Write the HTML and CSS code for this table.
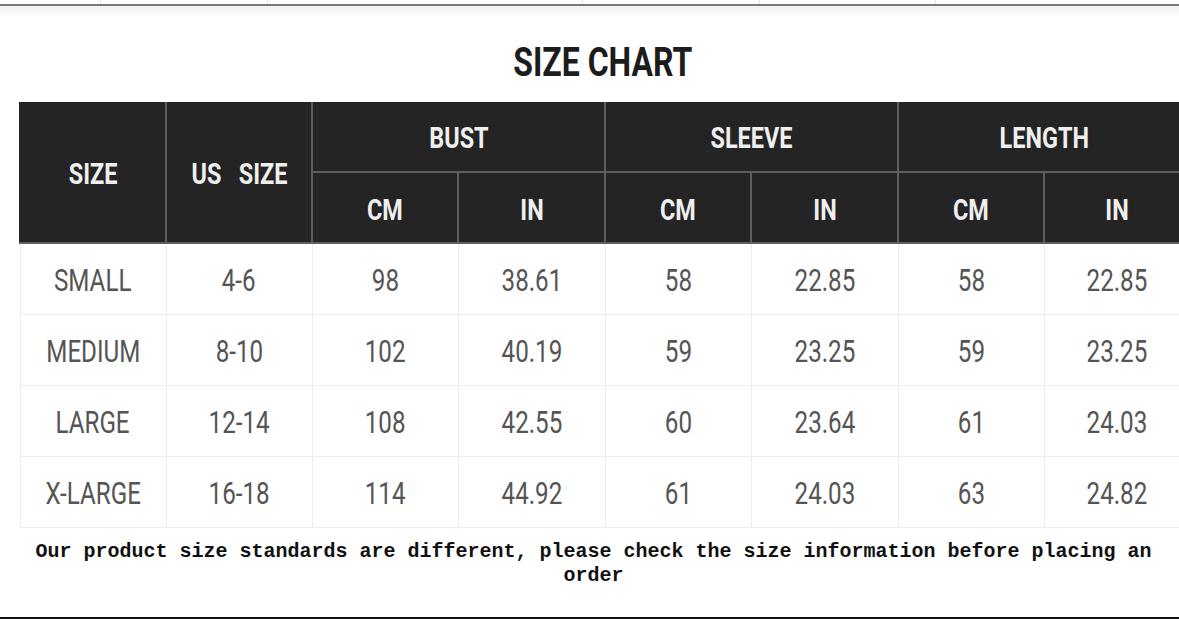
FILE: index.html
```html
<!DOCTYPE html>
<html>
<head>
<meta charset="utf-8">
<link rel="stylesheet" href="styles.css">
</head>
<body>
<div class="page">
  <div class="topstrip">
    <span class="cell c1"></span><span class="cell c2"></span><span class="cell c3"></span><span class="cell c4"></span><span class="cell c5"></span>
  </div>
  <div class="topband"></div>
  <div class="chart">
    <h1 class="title"><span class="cond">SIZE CHART</span></h1>
    <table class="grid">
      <colgroup>
        <col class="w146"><col class="w146"><col class="w146"><col class="w147"><col class="w146"><col class="w147"><col class="w146"><col class="w146">
      </colgroup>
      <thead>
        <tr class="h1">
          <th rowspan="2"><span class="cond">SIZE</span></th>
          <th rowspan="2"><span class="cond">US&nbsp;&nbsp; SIZE</span></th>
          <th colspan="2"><span class="cond">BUST</span></th>
          <th colspan="2"><span class="cond">SLEEVE</span></th>
          <th colspan="2"><span class="cond">LENGTH</span></th>
        </tr>
        <tr class="h2">
          <th><span class="cond">CM</span></th><th><span class="cond">IN</span></th>
          <th><span class="cond">CM</span></th><th><span class="cond">IN</span></th>
          <th><span class="cond">CM</span></th><th><span class="cond">IN</span></th>
        </tr>
      </thead>
      <tbody>
        <tr><td><span class="cond">SMALL</span></td><td><span class="cond">4-6</span></td><td><span class="cond">98</span></td><td><span class="cond">38.61</span></td><td><span class="cond">58</span></td><td><span class="cond">22.85</span></td><td><span class="cond">58</span></td><td><span class="cond">22.85</span></td></tr>
        <tr><td><span class="cond">MEDIUM</span></td><td><span class="cond">8-10</span></td><td><span class="cond">102</span></td><td><span class="cond">40.19</span></td><td><span class="cond">59</span></td><td><span class="cond">23.25</span></td><td><span class="cond">59</span></td><td><span class="cond">23.25</span></td></tr>
        <tr><td><span class="cond">LARGE</span></td><td><span class="cond">12-14</span></td><td><span class="cond">108</span></td><td><span class="cond">42.55</span></td><td><span class="cond">60</span></td><td><span class="cond">23.64</span></td><td><span class="cond">61</span></td><td><span class="cond">24.03</span></td></tr>
        <tr><td><span class="cond">X-LARGE</span></td><td><span class="cond">16-18</span></td><td><span class="cond">114</span></td><td><span class="cond">44.92</span></td><td><span class="cond">61</span></td><td><span class="cond">24.03</span></td><td><span class="cond">63</span></td><td><span class="cond">24.82</span></td></tr>
      </tbody>
    </table>
  </div>
  <p class="note">Our product size standards are different, please check the size information before placing an order</p>
  <div class="bottomrule"></div>
</div>
</body>
</html>
```

FILE: styles.css
```css
html, body {
  margin: 0;
  padding: 0;
  background: #ffffff;
}
body {
  width: 1179px;
  height: 619px;
  overflow: hidden;
}
.page {
  width: 1179px;
  height: 619px;
  display: flex;
  flex-direction: column;
  overflow: hidden;
}
.topstrip {
  height: 4px;
  display: flex;
  flex: none;
}
.topstrip .cell {
  height: 4px;
  border-right: 1px solid #e4e4e4;
  box-sizing: border-box;
}
.c1 { width: 101px; }
.c2 { width: 167px; }
.c3 { width: 315px; }
.c4 { width: 177px; }
.c5 { width: 176px; }
.topband {
  height: 8px;
  border-top: 2px solid #7a7a7a;
  background: linear-gradient(#f2f2f2, #fafafa);
  flex: none;
}
.chart {
  padding-left: 19px;
  width: 1168px;
  flex: none;
}
.title {
  margin: 0;
  height: 88px;
  box-sizing: border-box;
  padding-top: 23px;
  text-align: center;
  font-family: Roboto, "Liberation Sans", sans-serif;
  font-weight: 700;
  font-size: 41px;
  line-height: 50px;
  color: #1c1c1c;
}
.cond {
  display: inline-block;
  transform: scaleX(0.78);
  white-space: nowrap;
}
.grid {
  border-collapse: collapse;
  table-layout: fixed;
  width: 1168px;
  font-family: Roboto, "Liberation Sans", sans-serif;
}
.w146 { width: 146px; }
.w147 { width: 147px; }
.grid th {
  background: #242424;
  color: #efefef;
  font-weight: 700;
  font-size: 30px;
  padding: 0;
  border: 2px solid #5e5e5e;
  text-align: center;
  vertical-align: middle;
}
.grid tr.h1 th {
  height: 67px;
  border-top-color: #242424;
}
.grid tr.h2 th {
  height: 66px;
  padding-top: 3px;
}
.grid thead tr th:first-child {
  border-left-color: #242424;
}
.grid td {
  height: 67px;
  padding: 3px 0 0 0;
  border: 1px solid #ececec;
  text-align: center;
  vertical-align: middle;
  font-size: 31px;
  font-weight: 400;
  color: #555555;
}
.note {
  margin: 12px 0 0 0;
  padding-left: 8px;
  width: 1179px;
  box-sizing: border-box;
  text-align: center;
  font-family: "Liberation Mono", "DejaVu Sans Mono", monospace;
  font-weight: 700;
  font-size: 20px;
  line-height: 24px;
  color: #111111;
  flex: none;
}
.bottomrule {
  margin-top: auto;
  height: 2px;
  background: #111111;
  flex: none;
}
```
